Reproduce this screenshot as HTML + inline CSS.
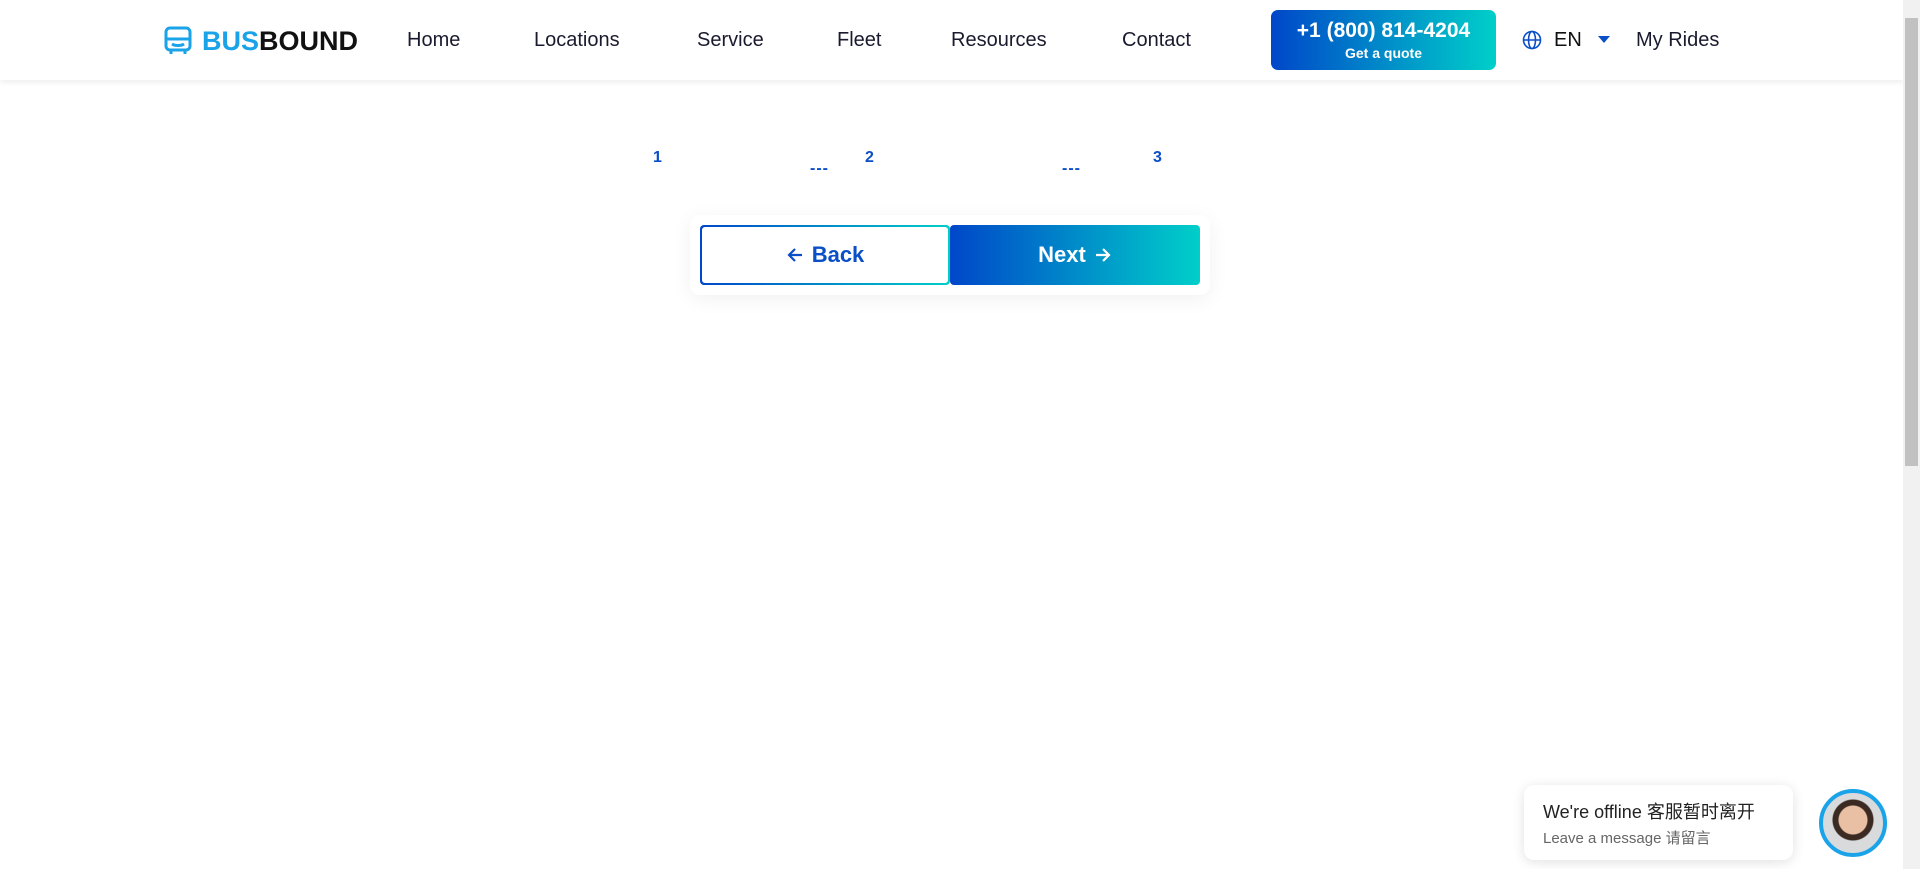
<!DOCTYPE html>
<html><head><meta charset="utf-8"><style>
*{margin:0;padding:0;box-sizing:border-box}
body{width:1920px;height:869px;overflow:hidden;background:#fff;font-family:"Liberation Sans","Noto Sans CJK SC",sans-serif;position:relative}
.hdr{position:absolute;left:0;top:0;width:1903px;height:80px;background:#fff;box-shadow:0 2px 6px rgba(0,0,0,.08)}
.nav{position:absolute;top:29px;font-size:20px;color:#1a1a2e}
.sb{position:absolute;right:0;top:0;width:17px;height:869px;background:#f1f1f1}
.thumb{position:absolute;right:2px;top:18px;width:13px;height:448px;background:#c1c1c1}
.step{position:absolute;top:149px;font-size:16px;font-weight:bold;color:#0a4fc7}
.dash{position:absolute;top:160px;font-size:16px;color:#0a4fc7;font-weight:bold;letter-spacing:1px}
.btn{display:flex;align-items:center;justify-content:center;gap:8px;font-size:22px;font-weight:bold}
</style></head><body>
<div class="hdr">
<svg style="position:absolute;left:164px;top:26px" width="28" height="30" viewBox="0 0 28 30" fill="none" stroke="#1aa3e8" stroke-width="3"><rect x="2" y="2" width="24" height="22" rx="4"/><path d="M2 13h24M8 18c3 2 9 2 12 0M7 24v4M21 24v4"/></svg>
<div style="position:absolute;left:202px;top:26px;font-size:27px;font-weight:bold;letter-spacing:0"><span style="color:#1aa3e8">BUS</span><span style="color:#111">BOUND</span></div>
<div class="nav" style="left:407px">Home</div>
<div class="nav" style="left:534px">Locations</div>
<div class="nav" style="left:697px">Service</div>
<div class="nav" style="left:837px">Fleet</div>
<div class="nav" style="left:951px">Resources</div>
<div class="nav" style="left:1122px">Contact</div>
<div style="position:absolute;left:1271px;top:10px;width:225px;height:60px;border-radius:7px;background:linear-gradient(90deg,#0047c9,#00cfc9);color:#fff;text-align:center">
<div style="font-size:21px;font-weight:bold;margin-top:9px">+1 (800) 814-4204</div>
<div style="font-size:14px;font-weight:bold;margin-top:2px">Get a quote</div></div>
<svg style="position:absolute;left:1522px;top:30px" width="20" height="20" viewBox="0 0 20 20" fill="none" stroke="#0a4fc7" stroke-width="1.6"><circle cx="10" cy="10" r="8.5"/><ellipse cx="10" cy="10" rx="3.5" ry="8.5"/><path d="M1.5 10h17"/></svg>
<div class="nav" style="left:1554px;color:#111">EN</div>
<svg style="position:absolute;left:1598px;top:36px" width="12" height="8"><path d="M0 0h12L6 7z" fill="#0a4fc7"/></svg>
<div class="nav" style="left:1636px">My Rides</div>
</div>
<div class="step" style="left:653px">1</div>
<div class="dash" style="left:810px">---</div>
<div class="step" style="left:865px">2</div>
<div class="dash" style="left:1062px">---</div>
<div class="step" style="left:1153px">3</div>
<div style="position:absolute;left:690px;top:215px;width:520px;height:80px;box-shadow:0 4px 20px rgba(0,0,0,.06);border-radius:10px"></div>
<div style="position:absolute;left:700px;top:225px;width:250px;height:60px;border-radius:4px;padding:2px;background:linear-gradient(90deg,#0047c9,#00cfc9)"><div class="btn" style="width:100%;height:100%;background:#fff;border-radius:3px;color:#0a4fc7"><svg width="18" height="18" viewBox="0 0 18 18" fill="none" stroke="#0a4fc7" stroke-width="2.2"><path d="M16 9H3M9 3L3 9l6 6"/></svg>Back</div></div>
<div class="btn" style="position:absolute;left:950px;top:225px;width:250px;height:60px;border-radius:4px;background:linear-gradient(90deg,#0047c9,#00cfc9);color:#fff">Next<svg width="18" height="18" viewBox="0 0 18 18" fill="none" stroke="#fff" stroke-width="2.2"><path d="M2 9h13M9 3l6 6-6 6"/></svg></div>
<div style="position:absolute;left:1524px;top:785px;width:269px;height:75px;background:#fff;border-radius:10px;box-shadow:0 2px 12px rgba(0,0,0,.12)">
<div style="position:absolute;left:19px;top:13px;font-size:18px;color:#222">We're offline 客服暂时离开</div>
<div style="position:absolute;left:19px;top:42px;font-size:15px;color:#666">Leave a message 请留言</div></div>
<div style="position:absolute;left:1819px;top:789px;width:68px;height:68px;border-radius:50%;border:4px solid #1aa3e8;background:radial-gradient(circle at 50% 45%,#e9c0a4 0 14px,#3b2a22 15px 20px,#d8dadc 21px)"></div>
<div class="sb"><div class="thumb"></div></div>
</body></html>
